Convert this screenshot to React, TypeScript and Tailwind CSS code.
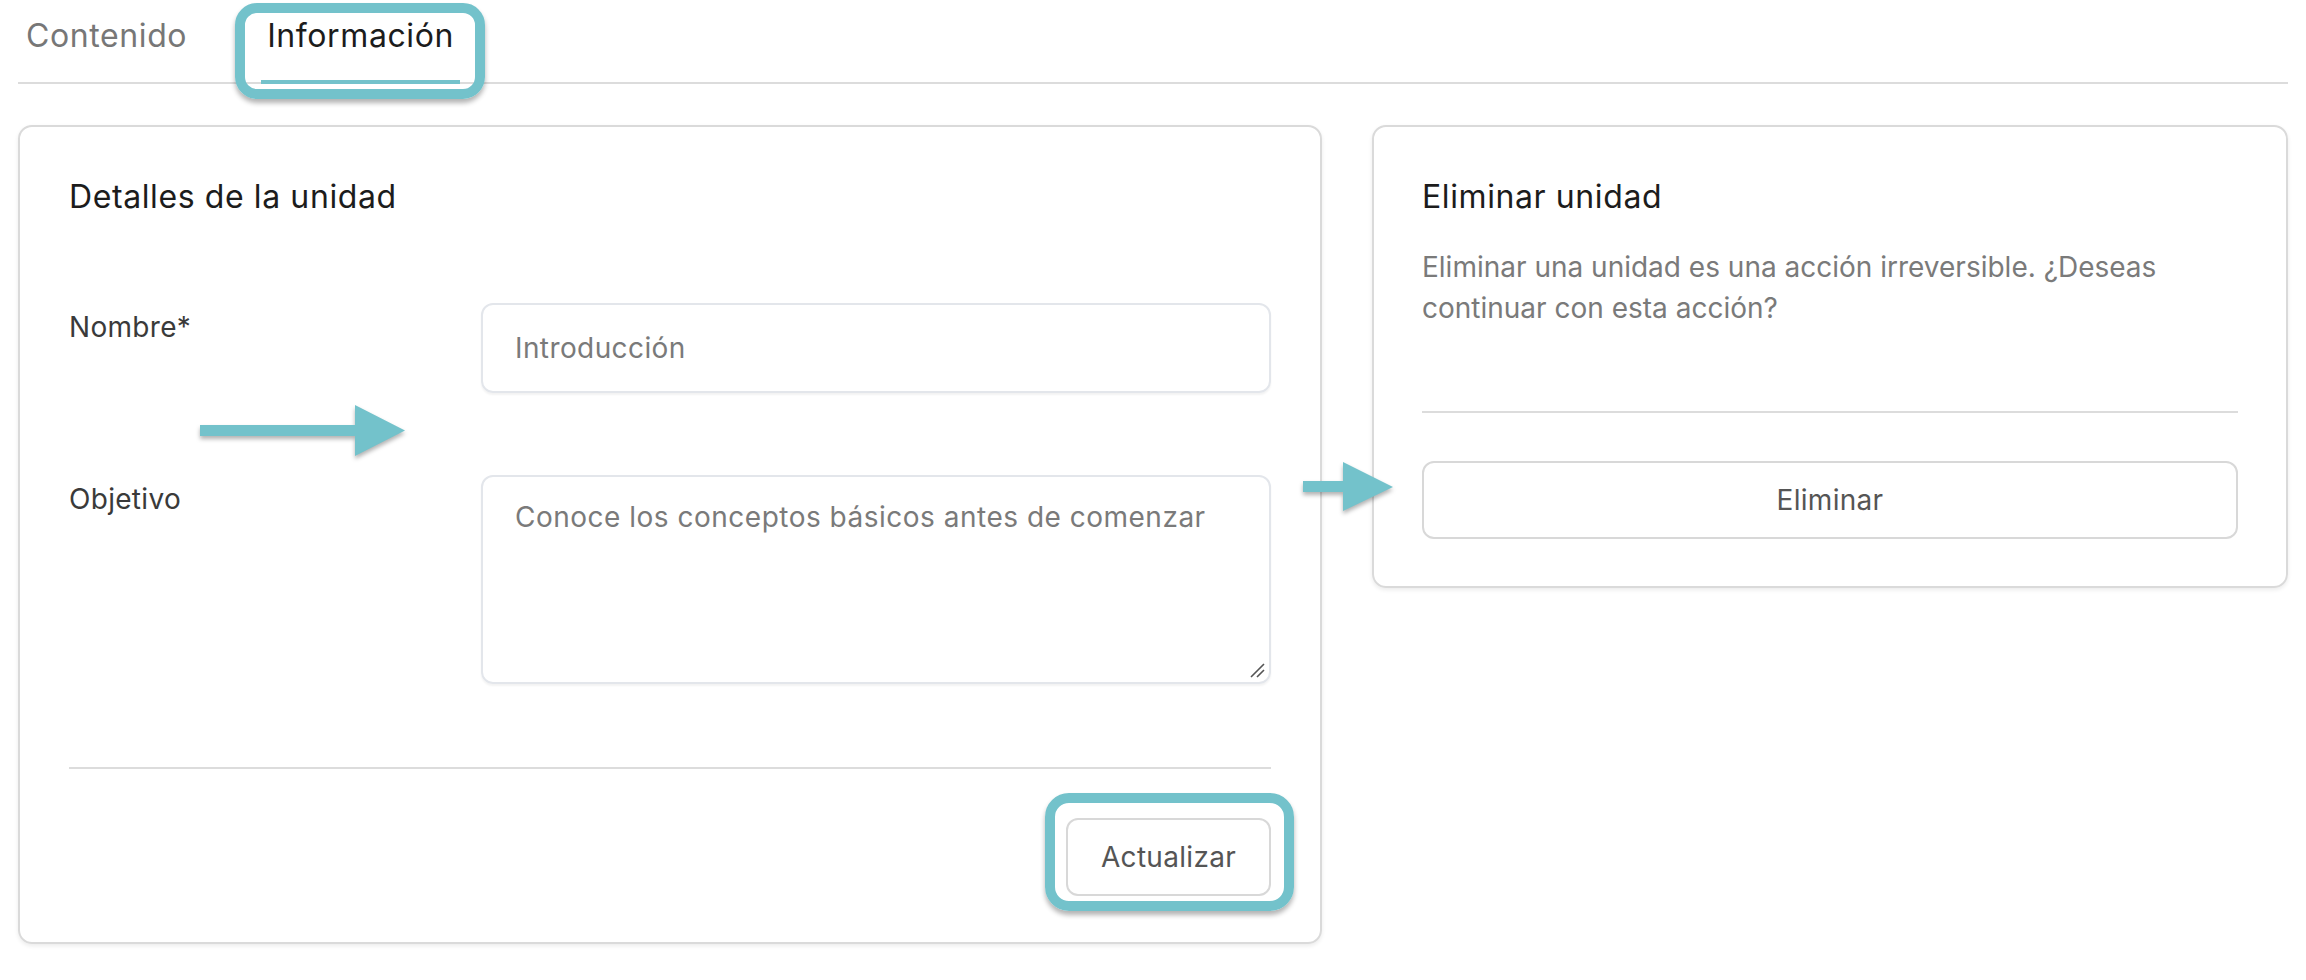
import React from "react";

const font = "font-['Inter','Noto_Sans',sans-serif]";

const Arrow: React.FC<{ className: string; w: number; h: number; points: string }> = ({
  className,
  w,
  h,
  points,
}) => (
  <svg
    className={`absolute drop-shadow-[0_3px_2px_rgba(0,0,0,0.3)] ${className}`}
    width={w}
    height={h}
    viewBox={`0 0 ${w} ${h}`}
  >
    <polygon points={points} fill="#73c2cb" />
  </svg>
);

export default function App() {
  return (
    <div className={`relative w-full h-[980px] bg-white ${font}`}>
      {/* tabs */}
      <div className="mx-[18px] flex border-b-2 border-[#dcdcdc] h-[84px]">
        <div className="px-[8px] pt-[16px] text-[32px] tracking-[0.6px] leading-[40px] text-[#777777]">Contenido</div>
        <div className="ml-[66px] px-[6px] pt-[16px] text-[32px] tracking-[0.6px] leading-[40px] text-[#1c1c1c] relative">
          Información
          <div className="absolute left-0 right-0 bottom-[-2px] h-[4px] bg-[#73c2cb]" />
        </div>
      </div>

      <div className="px-[18px] pt-[41px] flex items-start gap-[50px]">
        {/* details card */}
        <div className="w-[1304px] shrink-0 border-2 border-[#dadada] rounded-[14px] shadow-[0_2px_4px_rgba(0,0,0,0.08)] px-[49px] pt-[50px] pb-[46px]">
          <h2 className="text-[32px] tracking-[0.6px] leading-[40px] text-[#1c1c1c]">Detalles de la unidad</h2>
          <div className="mt-[86px] flex">
            <label className="w-[412px] shrink-0 pt-[4px] text-[28px] tracking-[0.3px] leading-[40px] text-[#3a3a3a]">Nombre*</label>
            <div className="flex-1 h-[90px] border-2 border-[#e3e6eb] rounded-[12px] shadow-[0_2px_2px_rgba(0,0,0,0.05)] px-[32px] flex items-center text-[28px] tracking-[0.4px] text-[#7a7a7a]">
              Introducción
            </div>
          </div>
          <div className="mt-[82px] flex">
            <label className="w-[412px] shrink-0 pt-[4px] text-[28px] tracking-[0.3px] leading-[40px] text-[#3a3a3a]">Objetivo</label>
            <div className="relative flex-1 h-[209px] border-2 border-[#e3e6eb] rounded-[12px] shadow-[0_2px_2px_rgba(0,0,0,0.05)] px-[32px] pt-[20px] text-[28px] tracking-[0.5px] leading-[40px] text-[#7a7a7a]">
              Conoce los conceptos básicos antes de comenzar
              <svg className="absolute right-[4px] bottom-[4px]" width="16" height="16" viewBox="0 0 16 16">
                <path d="M2 15 L15 2 M8 15 L15 8" stroke="#555" strokeWidth="1.6" />
              </svg>
            </div>
          </div>
          <div className="mt-[83px] h-[2px] bg-[#dcdcdc]" />
          <div className="mt-[49px] flex justify-end">
            <button className="w-[205px] h-[78px] border-2 border-[#d8d8d8] rounded-[12px] text-[28px] tracking-[0.3px] text-[#555555]">
              Actualizar
            </button>
          </div>
        </div>

        {/* delete card */}
        <div className="flex-1 border-2 border-[#dadada] rounded-[14px] shadow-[0_2px_4px_rgba(0,0,0,0.08)] px-[48px] pt-[50px] pb-[47px]">
          <h2 className="text-[32px] tracking-[0.6px] leading-[40px] text-[#1c1c1c]">Eliminar unidad</h2>
          <p className="mt-[30px] text-[28px] leading-[41px] text-[#7a7a7a]">
            Eliminar una unidad es una acción irreversible. ¿Deseas
            <br />
            continuar con esta acción?
          </p>
          <div className="mt-[82px] h-[2px] bg-[#dcdcdc]" />
          <button className="mt-[48px] w-full h-[78px] border-2 border-[#d8d8d8] rounded-[12px] text-[28px] tracking-[0.3px] text-[#555555]">
            Eliminar
          </button>
        </div>
      </div>

      {/* annotations */}
      <div className="absolute left-[235px] top-[3px] w-[250px] h-[96px] border-[10px] border-[#73c2cb] rounded-[22px] shadow-[0_4px_5px_rgba(0,0,0,0.3)]" />
      <div className="absolute left-[1045px] top-[793px] w-[249px] h-[118px] border-[10px] border-[#73c2cb] rounded-[24px] shadow-[0_4px_5px_rgba(0,0,0,0.3)]" />
      <Arrow
        className="left-[200px] top-[405px]"
        w={206}
        h={52}
        points="0,20 155,20 155,0 205,25.5 155,51 155,31 0,31"
      />
      <Arrow
        className="left-[1303px] top-[462px]"
        w={91}
        h={50}
        points="0,19 40,19 40,0 90,25 40,49 40,30 0,30"
      />
    </div>
  );
}
